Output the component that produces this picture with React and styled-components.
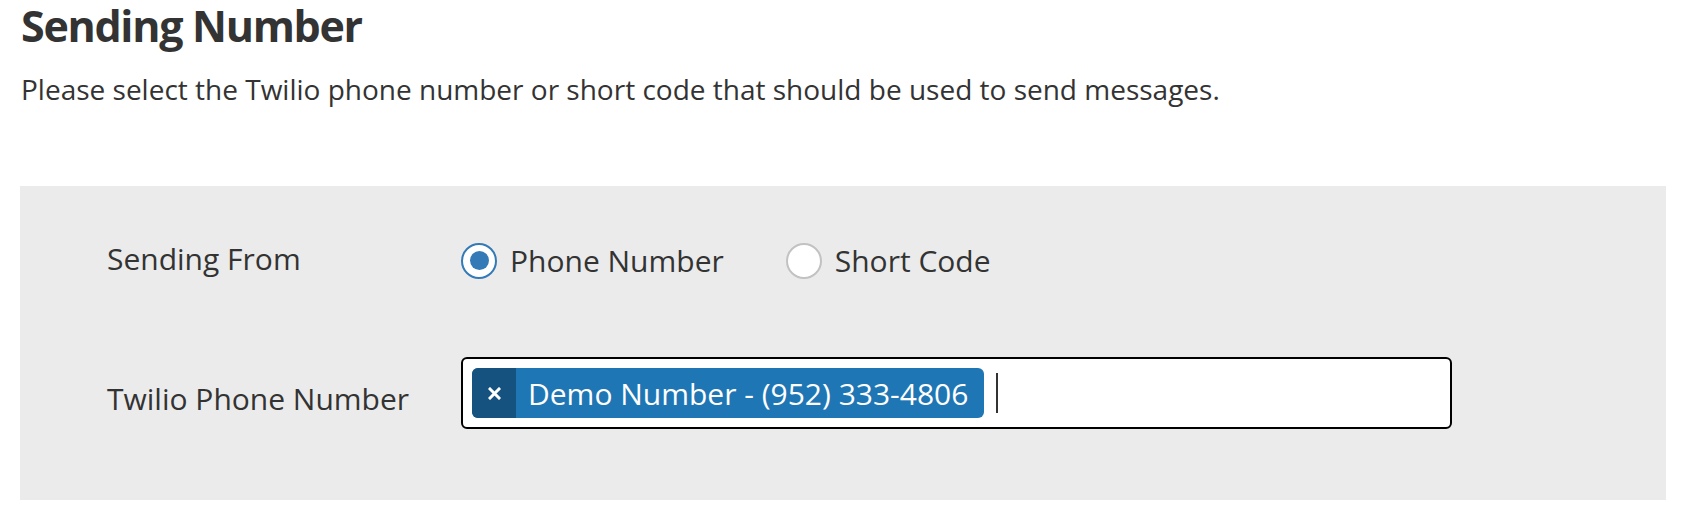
import styled, { createGlobalStyle } from 'styled-components';

const GlobalStyle = createGlobalStyle`
  html, body {
    margin: 0;
    padding: 0;
    background: #fff;
  }
  body {
    font-family: "Open Sans", "Liberation Sans", sans-serif;
    color: #333;
  }
`

const Page = styled.div`
    padding: 0 24px 24px 20px;
`

const Title = styled.h2`
    margin: 0;
    padding-left: 1px;
    font-size: 43px;
    line-height: 52px;
    font-weight: 700;
    letter-spacing: -1.3px;
    color: #333;
`

const Subtitle = styled.p`
    margin: 19px 0 0 1px;
    font-size: 28px;
    line-height: 36px;
    color: #333;
`

const Panel = styled.div`
    margin-top: 79px;
    width: 1646px;
    box-sizing: border-box;
    background: #ebebeb;
    padding: 52px 0 71px 87px;
    display: flex;
    flex-direction: column;
    gap: 76px;
`

const Row = styled.div`
    display: flex;
    align-items: flex-start;
`

const Label = styled.div`
    width: 354px;
    flex: none;
    font-size: 30px;
    line-height: 41px;
    padding-top: ${p => p.offset || 0}px;
`

const RadioGroup = styled.div`
    display: flex;
    align-items: center;
    gap: 62px;
    margin-top: 2px;
`

const RadioItem = styled.label`
    display: flex;
    align-items: center;
    gap: 13px;
    font-size: 30px;
    line-height: 41px;
`

const RadioCircle = styled.span`
    width: 36px;
    height: 36px;
    box-sizing: border-box;
    border-radius: 50%;
    background: #fff;
    border: 2px solid ${p => p.checked ? '#337ab7' : '#c2c2c2'};
    display: flex;
    align-items: center;
    justify-content: center;

    &::after {
        content: '';
        display: ${p => p.checked ? 'block' : 'none'};
        width: 19px;
        height: 19px;
        border-radius: 50%;
        background: #337ab7;
    }
`

const TagInput = styled.div`
    width: 991px;
    height: 72px;
    box-sizing: border-box;
    border: 2px solid #000;
    border-radius: 6px;
    background: #fff;
    padding: 0 9px;
    display: flex;
    align-items: center;
    gap: 12px;
`

const Chip = styled.div`
    height: 50px;
    display: flex;
    align-items: stretch;
    border-radius: 6px;
    overflow: hidden;
    background: #1f76b4;
    color: #fff;
`

const ChipRemove = styled.span`
    width: 44px;
    background: #15527f;
    display: flex;
    align-items: center;
    justify-content: center;
`

const ChipText = styled.span`
    display: flex;
    align-items: center;
    padding: 0 16px 0 12px;
    font-size: 30px;
`

const Caret = styled.span`
    width: 2px;
    height: 40px;
    background: #333;
`

const RemoveIcon = () => (
    <svg width="13" height="13" viewBox="0 0 13 13">
        <path d="M2 2 L11 11 M11 2 L2 11" stroke="#fff" strokeWidth="3" strokeLinecap="square" />
    </svg>
)

const Radio = ({ checked, children }) => (
    <RadioItem>
        <RadioCircle checked={checked} />
        {children}
    </RadioItem>
)

const App = () => {
  return (
    <Page>
        <GlobalStyle />
        <Title>Sending Number</Title>
        <Subtitle>Please select the Twilio phone number or short code that should be used to send messages.</Subtitle>
        <Panel>
            <Row>
                <Label>Sending From</Label>
                <RadioGroup>
                    <Radio checked>Phone Number</Radio>
                    <Radio>Short Code</Radio>
                </RadioGroup>
            </Row>
            <Row>
                <Label offset={21}>Twilio Phone Number</Label>
                <TagInput>
                    <Chip>
                        <ChipRemove><RemoveIcon /></ChipRemove>
                        <ChipText>Demo Number - (952) 333-4806</ChipText>
                    </Chip>
                    <Caret />
                </TagInput>
            </Row>
        </Panel>
    </Page>
  );
};

export default App;
